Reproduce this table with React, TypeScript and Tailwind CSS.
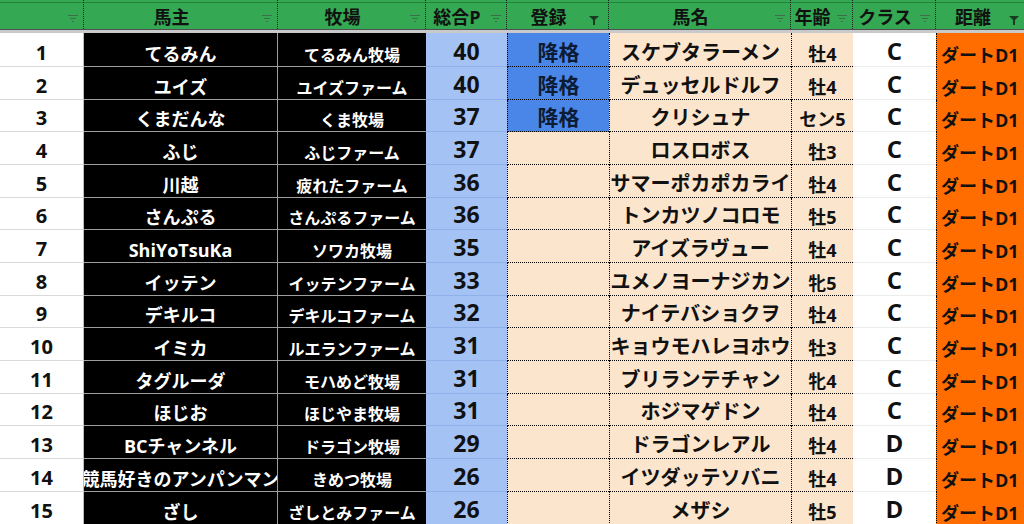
import React from "react";

type Row = {
  no: number;
  owner: string;
  farm: string;
  pts: number;
  reg: string;
  horse: string;
  age: string;
  cls: string;
  dist: string;
};

const rows: Row[] = [
  { no: 1, owner: "てるみん", farm: "てるみん牧場", pts: 40, reg: "降格", horse: "スケブタラーメン", age: "牡4", cls: "C", dist: "ダートD1" },
  { no: 2, owner: "ユイズ", farm: "ユイズファーム", pts: 40, reg: "降格", horse: "デュッセルドルフ", age: "牡4", cls: "C", dist: "ダートD1" },
  { no: 3, owner: "くまだんな", farm: "くま牧場", pts: 37, reg: "降格", horse: "クリシュナ", age: "セン5", cls: "C", dist: "ダートD1" },
  { no: 4, owner: "ふじ", farm: "ふじファーム", pts: 37, reg: "", horse: "ロスロボス", age: "牡3", cls: "C", dist: "ダートD1" },
  { no: 5, owner: "川越", farm: "疲れたファーム", pts: 36, reg: "", horse: "サマーポカポカライ", age: "牡4", cls: "C", dist: "ダートD1" },
  { no: 6, owner: "さんぷる", farm: "さんぷるファーム", pts: 36, reg: "", horse: "トンカツノコロモ", age: "牡5", cls: "C", dist: "ダートD1" },
  { no: 7, owner: "ShiYoTsuKa", farm: "ソワカ牧場", pts: 35, reg: "", horse: "アイズラヴュー", age: "牡4", cls: "C", dist: "ダートD1" },
  { no: 8, owner: "イッテン", farm: "イッテンファーム", pts: 33, reg: "", horse: "ユメノヨーナジカン", age: "牝5", cls: "C", dist: "ダートD1" },
  { no: 9, owner: "デキルコ", farm: "デキルコファーム", pts: 32, reg: "", horse: "ナイテバショクヲ", age: "牡4", cls: "C", dist: "ダートD1" },
  { no: 10, owner: "イミカ", farm: "ルエランファーム", pts: 31, reg: "", horse: "キョウモハレヨホウ", age: "牡3", cls: "C", dist: "ダートD1" },
  { no: 11, owner: "タグルーダ", farm: "モハめど牧場", pts: 31, reg: "", horse: "ブリランテチャン", age: "牝4", cls: "C", dist: "ダートD1" },
  { no: 12, owner: "ほじお", farm: "ほじやま牧場", pts: 31, reg: "", horse: "ホジマゲドン", age: "牡4", cls: "C", dist: "ダートD1" },
  { no: 13, owner: "BCチャンネル", farm: "ドラゴン牧場", pts: 29, reg: "", horse: "ドラゴンレアル", age: "牡4", cls: "D", dist: "ダートD1" },
  { no: 14, owner: "競馬好きのアンパンマン", farm: "きめつ牧場", pts: 26, reg: "", horse: "イツダッテソバニ", age: "牡4", cls: "D", dist: "ダートD1" },
  { no: 15, owner: "ざし", farm: "ざしとみファーム", pts: 26, reg: "", horse: "メザシ", age: "牡5", cls: "D", dist: "ダートD1" },
];

// excel row heights drift between 32 and 34px
const heights = [34, 33, 32, 33, 33, 32, 33, 33, 32, 33, 33, 32, 33, 33, 33];

function FilterIcon({ active }: { active?: boolean }) {
  if (active) {
    return (
      <svg className="absolute right-[9px] top-[16px]" width="10" height="9" viewBox="0 0 10 9">
        <polygon points="0,0 10,0 6,4 6,9 4,9 4,4" fill="#1b3a22" />
      </svg>
    );
  }
  return (
    <svg className="absolute right-[5px] top-[15px]" width="10" height="7" viewBox="0 0 10 7">
      <g stroke="#3d6e48" strokeWidth="1">
        <line x1="0" y1="0.5" x2="10" y2="0.5" />
        <line x1="2" y1="3.5" x2="8" y2="3.5" />
        <line x1="4" y1="6.5" x2="6" y2="6.5" />
      </g>
    </svg>
  );
}

function Head({ label, className, active }: { label: string; className: string; active?: boolean }) {
  return (
    <div
      className={`relative flex h-full shrink-0 items-end justify-center pr-[18px] pb-[3px] text-[18px] leading-none text-[#111] border-r border-dotted border-[#1f1f1f] ${className}`}
    >
      <span className="whitespace-nowrap">{label}</span>
      <FilterIcon active={active} />
    </div>
  );
}

export default function App() {
  return (
    <div className="w-[1024px] h-[524px] overflow-hidden bg-white font-['Open_Sans','Noto_Sans_CJK_JP',sans-serif] font-bold">
      <div className="flex h-[29px] w-[1028px] bg-[linear-gradient(to_bottom,#34a853_2px,#23853c_2px,#23853c_3px,#34a853_3px)]">
        <Head label="" className="w-[84px]" />
        <Head label="馬主" className="w-[194px]" />
        <Head label="牧場" className="w-[148px]" />
        <Head label="総合P" className="w-[81px]" />
        <Head label="登録" className="w-[102px]" active />
        <Head label="馬名" className="w-[182px]" />
        <Head label="年齢" className="w-[62px]" />
        <Head label="クラス" className="w-[83px]" />
        <Head label="距離" className="w-[92px] border-r-0" active />
      </div>
      <div className="h-px w-[1028px] bg-[#505050]" />
      <div className="h-[3px] w-[1028px] bg-[#c9c9c9]" />

      {rows.map((r, i) => {
        const cell = "flex h-full shrink-0 items-end justify-center pb-[3px] leading-none whitespace-nowrap overflow-hidden";
        return (
          <div key={r.no} className="flex w-[1028px]" style={{ height: heights[i] }}>
            <div className={`${cell} w-[84px] bg-white text-[20px] text-[#111] border-r border-b border-r-[#bdbdbd] border-b-[#dadada]`}>
              {r.no}
            </div>
            <div className={`${cell} w-[194px] bg-black text-[18px] text-white border-r border-b border-[#9e9e9e]`}>
              {r.owner}
            </div>
            <div className={`${cell} w-[148px] bg-black text-[16px] text-white border-b border-[#9e9e9e]`}>
              {r.farm}
            </div>
            <div className={`${cell} w-[81px] bg-[#a4c2f4] text-[23px] text-[#111] border-b border-[#8fb0e8]`}>
              {r.pts}
            </div>
            <div
              className={`${cell} w-[102px] text-[21px] text-[#0d1b33] border-l border-b border-dotted border-black ${
                r.reg ? "bg-[#4a86e8]" : "bg-[#fce5cd]"
              }`}
            >
              {r.reg}
            </div>
            <div className={`${cell} w-[182px] bg-[#fce5cd] text-[20px] text-[#111] border-l border-b border-dotted border-black`}>
              {r.horse}
            </div>
            <div className={`${cell} w-[62px] bg-[#fce5cd] text-[18px] text-[#111] border-l border-b border-dotted border-black`}>
              {r.age}
            </div>
            <div className={`${cell} w-[83px] bg-white text-[24px] text-[#111] border-b border-[#ececec]`}>
              {r.cls}
            </div>
            <div className={`${cell} w-[92px] justify-start pl-[4px] bg-[#ff6d01] text-[18px] text-[#111] border-l border-dotted border-black`}>
              {r.dist}
            </div>
          </div>
        );
      })}
    </div>
  );
}
